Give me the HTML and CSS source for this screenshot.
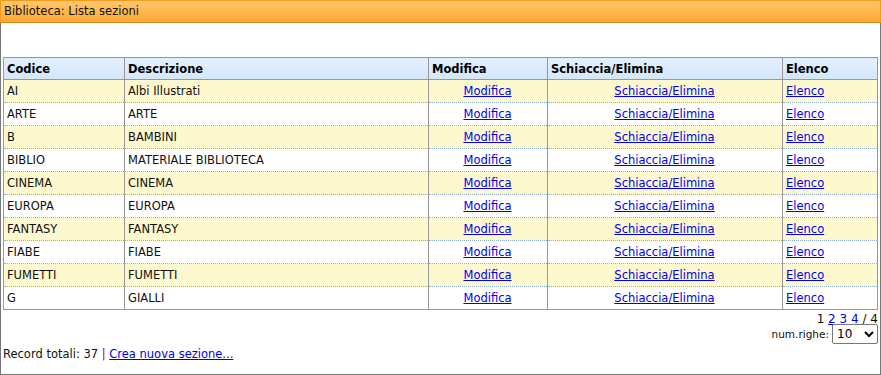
FILE: index.html
```html
<!DOCTYPE html>
<html>
<head>
<meta charset="utf-8">
<title>Biblioteca: Lista sezioni</title>
<link rel="stylesheet" href="styles.css">
</head>
<body>
<div class="window">
    <div class="titlebar">Biblioteca: Lista sezioni</div>
    <div class="content">
        <table class="grid">
            <tr>
                <th class="c-cod">Codice</th>
                <th class="c-desc">Descrizione</th>
                <th class="c-mod">Modifica</th>
                <th class="c-del">Schiaccia/Elimina</th>
                <th class="c-list">Elenco</th>
            </tr>
            <tr class="odd"><td>AI</td><td>Albi Illustrati</td><td class="mid"><a href="#">Modifica</a></td><td class="mid"><a href="#">Schiaccia/Elimina</a></td><td><a href="#">Elenco</a></td></tr>
            <tr><td>ARTE</td><td>ARTE</td><td class="mid"><a href="#">Modifica</a></td><td class="mid"><a href="#">Schiaccia/Elimina</a></td><td><a href="#">Elenco</a></td></tr>
            <tr class="odd"><td>B</td><td>BAMBINI</td><td class="mid"><a href="#">Modifica</a></td><td class="mid"><a href="#">Schiaccia/Elimina</a></td><td><a href="#">Elenco</a></td></tr>
            <tr><td>BIBLIO</td><td>MATERIALE BIBLIOTECA</td><td class="mid"><a href="#">Modifica</a></td><td class="mid"><a href="#">Schiaccia/Elimina</a></td><td><a href="#">Elenco</a></td></tr>
            <tr class="odd"><td>CINEMA</td><td>CINEMA</td><td class="mid"><a href="#">Modifica</a></td><td class="mid"><a href="#">Schiaccia/Elimina</a></td><td><a href="#">Elenco</a></td></tr>
            <tr><td>EUROPA</td><td>EUROPA</td><td class="mid"><a href="#">Modifica</a></td><td class="mid"><a href="#">Schiaccia/Elimina</a></td><td><a href="#">Elenco</a></td></tr>
            <tr class="odd"><td>FANTASY</td><td>FANTASY</td><td class="mid"><a href="#">Modifica</a></td><td class="mid"><a href="#">Schiaccia/Elimina</a></td><td><a href="#">Elenco</a></td></tr>
            <tr><td>FIABE</td><td>FIABE</td><td class="mid"><a href="#">Modifica</a></td><td class="mid"><a href="#">Schiaccia/Elimina</a></td><td><a href="#">Elenco</a></td></tr>
            <tr class="odd"><td>FUMETTI</td><td>FUMETTI</td><td class="mid"><a href="#">Modifica</a></td><td class="mid"><a href="#">Schiaccia/Elimina</a></td><td><a href="#">Elenco</a></td></tr>
            <tr><td>G</td><td>GIALLI</td><td class="mid"><a href="#">Modifica</a></td><td class="mid"><a href="#">Schiaccia/Elimina</a></td><td><a href="#">Elenco</a></td></tr>
        </table>
        <div class="pager">1 <a href="#">2</a> <a href="#">3</a> <a href="#">4</a> / 4</div>
        <div class="rows">
            <label>num.righe:</label>
            <select class="rows-select">
                <option>10</option>
                <option>20</option>
                <option>50</option>
            </select>
        </div>
        <div class="footer">Record totali: 37 <span class="sep">|</span> <a href="#">Crea nuova sezione...</a></div>
    </div>
</div>
</body>
</html>
```

FILE: styles.css
```css
* {
    box-sizing: border-box;
}

body {
    margin: 0;
    font-family: "DejaVu Sans", Verdana, sans-serif;
    font-size: 11.5px;
    color: #111;
    background: #fff;
}

a {
    color: #0000ee;
}

.window {
    width: 881px;
    height: 375px;
    border: 1px solid #777;
    border-top: none;
}

.titlebar {
    height: 23px;
    margin: 0 -1px;
    padding: 3px 4px 0 3px;
    background: linear-gradient(#ffc870, #ffa830);
    border: 1px solid #f29b1d;
    border-bottom-color: #d88a20;
    color: #111;
}

.content {
    padding: 34px 2px 0 2px;
}

.grid {
    width: 100%;
    border-collapse: collapse;
    border: 1px solid #999;
}

.grid th {
    height: 22px;
    padding: 0 4px 0 3px;
    text-align: left;
    font-weight: bold;
    color: #000;
    background: linear-gradient(#e4f0fd, #d3e6fb);
    border: 1px solid #999;
}

.grid td {
    height: 23px;
    padding: 0 4px 0 3px;
    border-left: 1px solid #999;
    border-right: 1px solid #999;
    border-bottom: 1px dotted #8fb1d8;
}

.grid tr:last-child td {
    border-bottom: 1px solid #999;
}

.grid .odd td {
    background: #fdf8cd;
}

.grid .mid {
    text-align: center;
}

.c-cod { width: 121px; }
.c-desc { width: 304px; }
.c-mod { width: 119px; }
.c-del { width: 235px; }

.pager {
    margin-top: 2px;
    text-align: right;
    line-height: 15px;
    font-size: 12px;
}

.rows {
    display: flex;
    justify-content: flex-end;
    align-items: center;
    gap: 3px;
    margin-top: -3px;
    font-size: 10.5px;
}

.rows-select {
    width: 46px;
    height: 20px;
    font-family: "DejaVu Sans", Verdana, sans-serif;
    font-size: 12px;
    border: 1px solid #777;
    border-radius: 2px;
    background: #fff;
}

.footer {
    margin-top: 2px;
    line-height: 16px;
}

.sep {
    color: #800080;
}
```
